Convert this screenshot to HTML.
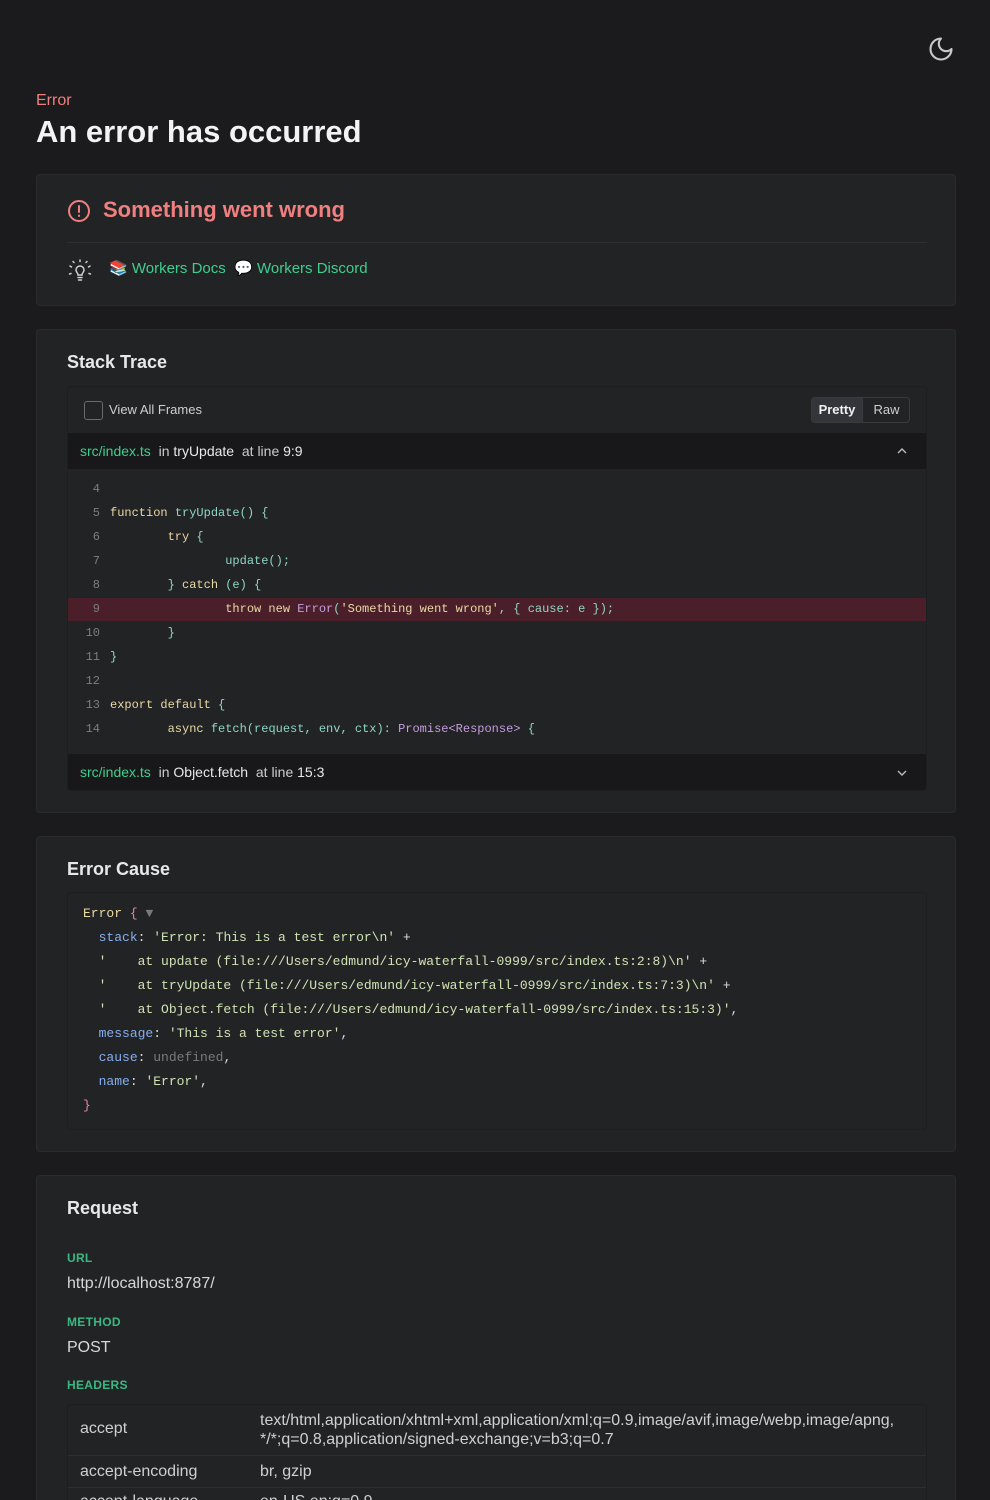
<!DOCTYPE html>
<html style="overflow:hidden;height:1500px"><head><meta charset="utf-8"><style>
*{box-sizing:border-box;margin:0;padding:0}
body{width:990px;height:1500px;overflow:hidden;background:#1b1b1d;font-family:"Liberation Sans",sans-serif;color:#e8e8e8;position:relative}
.a{position:absolute;white-space:pre}
.card{position:absolute;left:36px;width:920px;background:#222325;border:1px solid #2a2b2e;border-radius:4px}
.m{font-family:"Liberation Mono",monospace}
.k{color:#e9d9a6}.i{color:#8fd6c6}.p{color:#c69ee0}.s{color:#e9d9a6}
.bl{color:#86aef0}.st{color:#cfe3b4}.g{color:#7a7a7d}.pk{color:#e58aa0}
.green{color:#3ecf8e}
</style></head><body>
<svg class="a" style="left:927px;top:35px" width="28" height="28" viewBox="0 0 24 24" fill="none" stroke="#c8c8c8" stroke-width="1.8" stroke-linecap="round" stroke-linejoin="round"><path d="M12 3a6 6 0 0 0 9 9 9 9 0 1 1-9-9Z"/></svg>
<div class="a" style="left:36px;top:92px;font-size:16px;color:#f07f7f">Error</div>
<div class="a" style="left:36px;top:114px;font-size:31px;font-weight:bold;color:#f3f3f3">An error has occurred</div>

<div class="card" style="top:174px;height:132px">
 <svg class="a" style="left:30px;top:24px" width="24" height="24" viewBox="0 0 24 24" fill="none" stroke="#f08080" stroke-width="2" stroke-linecap="round"><circle cx="12" cy="12" r="10"/><path d="M12 7v6M12 16.5v.5"/></svg>
 <div class="a" style="left:66px;top:22px;font-size:22px;font-weight:bold;color:#f08080">Something went wrong</div>
 <div class="a" style="left:30px;top:67px;width:860px;height:1px;background:#2e2f32"></div>
 <svg class="a" style="left:30px;top:82px" width="26" height="26" viewBox="0 0 26 26" fill="none" stroke="#cfcfcf" stroke-width="1.5" stroke-linecap="round"><path d="M9 13a4 4 0 1 1 8 0c0 2-2 3-2 5h-4c0-2-2-3-2-5Z"/><path d="M11 20.5h4M11.5 23h3M3 9l1.5 1M23 9l-1.5 1M13 3v1.5M6 4.5l1 1M20 4.5l-1 1M2.5 17l1.5-.5M23.5 17l-1.5-.5"/></svg>
 <div class="a" style="left:72px;top:84px;font-size:15px"><span>📚</span> <span class="green">Workers Docs</span>  <span>💬</span> <span class="green">Workers Discord</span></div>
</div>

<div class="card" style="top:329px;height:484px">
 <div class="a" style="left:30px;top:22px;font-size:18px;font-weight:bold">Stack Trace</div>
 <div class="a" style="left:30px;top:56px;width:860px;height:405px;border:1px solid #1d1e20;border-radius:4px;background:#222325;overflow:hidden">
  <div class="a" style="left:16px;top:14px;width:19px;height:19px;border:1.5px solid #6a6b6e;border-radius:3px"></div>
  <div class="a" style="left:41px;top:15px;font-size:13px;color:#cfcfcf">View All Frames</div>
  <div class="a" style="left:743px;top:10px;width:99px;height:26px;border:1px solid #3a3b3e;border-radius:4px;overflow:hidden;font-size:13px">
   <div class="a" style="left:0;top:0;width:50px;height:24px;background:#34353a;color:#f0f0f0;text-align:center;line-height:24px;font-weight:bold">Pretty</div>
   <div class="a" style="left:50px;top:0;width:48px;height:24px;color:#cfcfcf;text-align:center;line-height:24px;border-left:1px solid #3a3b3e">Raw</div>
  </div>
  <div class="a" style="left:0;top:46px;width:860px;height:36px;background:#18181a;font-size:14px;line-height:36px;padding-left:12px"><span class="green">src/index.ts</span>  <span style="color:#ccc">in</span> tryUpdate  <span style="color:#ccc">at line</span> 9:9</div>
  <svg class="a" style="left:828px;top:59px" width="12" height="10" viewBox="0 0 12 10" fill="none" stroke="#bbb" stroke-width="1.4"><path d="M2 7l4-4 4 4"/></svg>
  <div class="a" style="left:0;top:211px;width:860px;height:23px;background:#4b1f29"></div>
  <div class="a m" style="left:0;top:90px;font-size:12px;line-height:24px;width:32px;text-align:right;color:#7d7d80">4
5
6
7
8
9
10
11
12
13
14</div>
  <div class="a m" style="left:42px;top:90px;font-size:12px;line-height:24px">
<span class="k">function</span> <span class="i">tryUpdate() {</span>
        <span class="k">try</span> <span class="i">{</span>
                <span class="i">update();</span>
        <span class="i">}</span> <span class="k">catch</span> <span class="i">(e) {</span>
                <span class="k">throw new</span> <span class="p">Error</span><span class="i">(</span><span class="s">'Something went wrong'</span><span class="i">, { cause: e });</span>
        <span class="i">}</span>
<span class="i">}</span>

<span class="k">export default</span> <span class="i">{</span>
        <span class="k">async</span> <span class="i">fetch(request, env, ctx):</span> <span class="p">Promise&lt;Response&gt;</span> <span class="i">{</span></div>
  <div class="a" style="left:0;top:367px;width:860px;height:38px;background:#18181a;font-size:14px;line-height:36px;padding-left:12px"><span class="green">src/index.ts</span>  <span style="color:#ccc">in</span> Object.fetch  <span style="color:#ccc">at line</span> 15:3</div>
  <svg class="a" style="left:828px;top:381px" width="12" height="10" viewBox="0 0 12 10" fill="none" stroke="#bbb" stroke-width="1.4"><path d="M2 3l4 4 4-4"/></svg>
 </div>
</div>

<div class="card" style="top:836px;height:316px">
 <div class="a" style="left:30px;top:22px;font-size:18px;font-weight:bold">Error Cause</div>
 <div class="a" style="left:30px;top:55px;width:860px;height:238px;border:1px solid #1d1e20;border-radius:4px"></div>
 <div class="a m" style="left:46px;top:65px;font-size:13px;line-height:24px;color:#ddd"><span class="k">Error</span> <span class="pk">{</span> <span class="g">▼</span>
  <span class="bl">stack</span>: <span class="st">'Error: This is a test error\n'</span> +
  <span class="st">'    at update (file:///Users/edmund/icy-waterfall-0999/src/index.ts:2:8)\n'</span> +
  <span class="st">'    at tryUpdate (file:///Users/edmund/icy-waterfall-0999/src/index.ts:7:3)\n'</span> +
  <span class="st">'    at Object.fetch (file:///Users/edmund/icy-waterfall-0999/src/index.ts:15:3)'</span>,
  <span class="bl">message</span>: <span class="st">'This is a test error'</span>,
  <span class="bl">cause</span>: <span class="g">undefined</span>,
  <span class="bl">name</span>: <span class="st">'Error'</span>,
<span class="pk">}</span></div>
</div>

<div class="card" style="top:1175px;height:325px;border-bottom:none;border-radius:4px 4px 0 0;overflow:hidden">
 <div class="a" style="left:30px;top:22px;font-size:18px;font-weight:bold">Request</div>
 <div class="a" style="left:30px;top:75px;font-size:12px;font-weight:bold;color:#3ab884;letter-spacing:.3px">URL</div>
 <div class="a" style="left:30px;top:99px;font-size:16px;color:#d8d8d8">http://localhost:8787/</div>
 <div class="a" style="left:30px;top:139px;font-size:12px;font-weight:bold;color:#3ab884;letter-spacing:.3px">METHOD</div>
 <div class="a" style="left:30px;top:163px;font-size:16px;color:#d8d8d8">POST</div>
 <div class="a" style="left:30px;top:202px;font-size:12px;font-weight:bold;color:#3ab884;letter-spacing:.3px">HEADERS</div>
 <div class="a" style="left:30px;top:228px;width:860px;height:97px;border:1px solid #1d1e20;border-bottom:none;border-radius:4px 4px 0 0;font-size:16px;color:#d0d0d0;overflow:hidden">
  <div class="a" style="left:12px;top:15px">accept</div>
  <div class="a" style="left:192px;top:6px;line-height:19px">text/html,application/xhtml+xml,application/xml;q=0.9,image/avif,image/webp,image/apng,
*/*;q=0.8,application/signed-exchange;v=b3;q=0.7</div>
  <div class="a" style="left:0;top:50px;width:858px;height:1px;background:#2e2f32"></div>
  <div class="a" style="left:12px;top:58px">accept-encoding</div>
  <div class="a" style="left:192px;top:58px">br, gzip</div>
  <div class="a" style="left:0;top:82px;width:858px;height:1px;background:#2e2f32"></div>
  <div class="a" style="left:12px;top:88px">accept-language</div>
  <div class="a" style="left:192px;top:88px">en-US,en;q=0.9</div>
 </div>
</div>
</body></html>
